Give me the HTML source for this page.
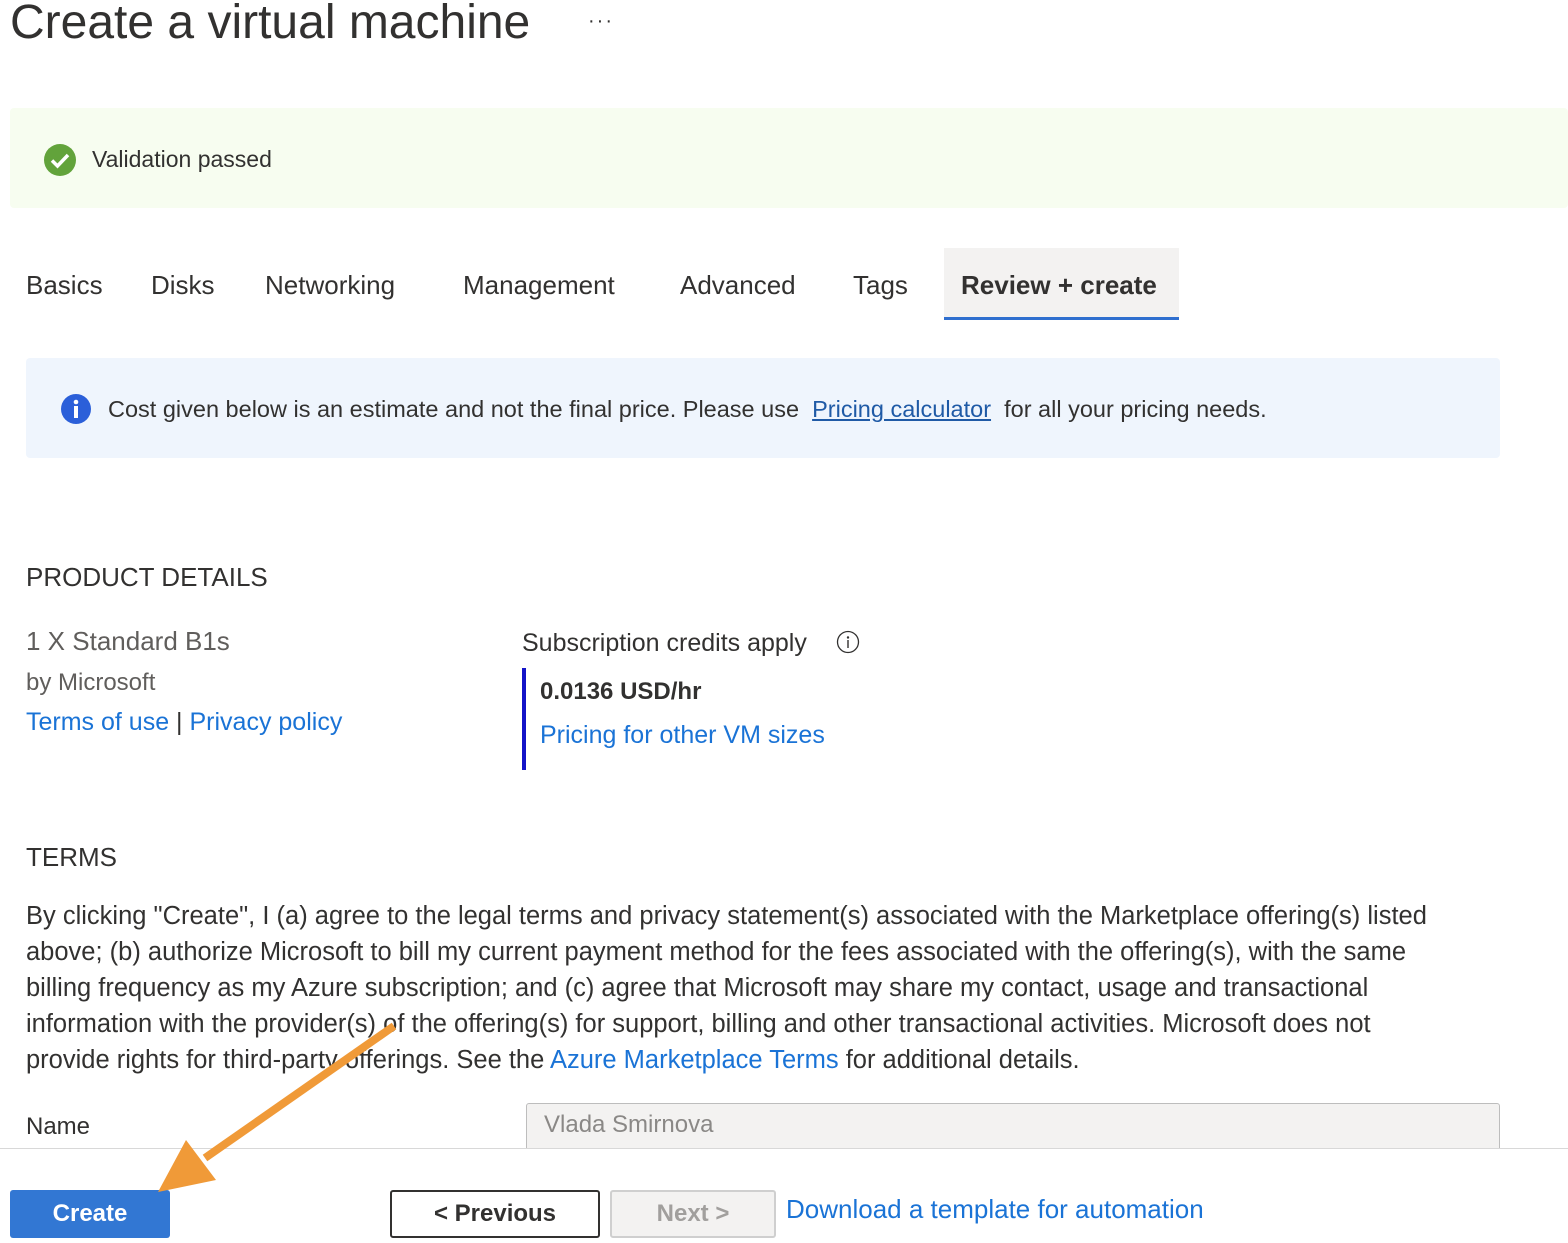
<!DOCTYPE html>
<html><head><meta charset="utf-8"><style>
body{margin:0;width:1568px;height:1242px;background:#fff;font-family:"Liberation Sans",sans-serif;color:#323130;position:relative;overflow:hidden}
.a{position:absolute;white-space:nowrap}
.l{color:#1a73d6}
</style></head><body>
<div class="a" style="left:10px;top:-5px;font-size:48px;color:#323130">Create a virtual machine</div>
<div class="a" style="left:588px;top:10px;font-size:20px;letter-spacing:2px">···</div>
<div class="a" style="left:10px;top:108px;width:1558px;height:100px;background:#f7fdf0;border-radius:4px"></div>
<svg class="a" style="left:43px;top:143px" width="34" height="34"><circle cx="17" cy="17" r="16" fill="#62a33b"/><path d="M9 17.5l5.5 5.5L25 12" stroke="#fff" stroke-width="3.5" fill="none"/></svg>
<div class="a" style="left:92px;top:146px;font-size:23px">Validation passed</div>
<div class="a" style="left:26px;top:270px;font-size:26px">Basics</div>
<div class="a" style="left:151px;top:270px;font-size:26px">Disks</div>
<div class="a" style="left:265px;top:270px;font-size:26px">Networking</div>
<div class="a" style="left:463px;top:270px;font-size:26px">Management</div>
<div class="a" style="left:680px;top:270px;font-size:26px">Advanced</div>
<div class="a" style="left:853px;top:270px;font-size:26px">Tags</div>
<div class="a" style="left:944px;top:248px;width:235px;height:69px;background:#f3f2f1;border-bottom:3px solid #2f6fcf"></div>
<div class="a" style="left:961px;top:270px;font-size:26px;font-weight:bold">Review + create</div>
<div class="a" style="left:26px;top:358px;width:1474px;height:100px;background:#eff5fd;border-radius:4px"></div>
<svg class="a" style="left:60px;top:393px" width="32" height="32"><circle cx="16" cy="16" r="15" fill="#2b5fd9"/><circle cx="16" cy="9" r="2.3" fill="#fff"/><rect x="14" y="13" width="4" height="12" fill="#fff"/></svg>
<div class="a" style="left:108px;top:396px;font-size:23.5px">Cost given below is an estimate and not the final price. Please use &nbsp;<span style="color:#1f5aa6;text-decoration:underline">Pricing calculator</span>&nbsp; for all your pricing needs.</div>
<div class="a" style="left:26px;top:562px;font-size:26px">PRODUCT DETAILS</div>
<div class="a" style="left:26px;top:626px;font-size:26px;color:#605e5c">1 X Standard B1s</div>
<div class="a" style="left:26px;top:669px;font-size:24px;color:#605e5c">by Microsoft</div>
<div class="a" style="left:26px;top:708px;font-size:25px"><span class="l">Terms of use</span> | <span class="l">Privacy policy</span></div>
<div class="a" style="left:522px;top:629px;font-size:25px">Subscription credits apply</div>
<svg class="a" style="left:836px;top:630px" width="24" height="24"><circle cx="12" cy="12" r="10.5" stroke="#323130" stroke-width="1.3" fill="none"/><circle cx="12" cy="7.5" r="1.2" fill="#323130"/><rect x="11.3" y="10" width="1.4" height="8" fill="#323130"/></svg>
<div class="a" style="left:522px;top:668px;width:4px;height:102px;background:#1414c8"></div>
<div class="a" style="left:540px;top:678px;font-size:24px;font-weight:bold">0.0136 USD/hr</div>
<div class="a l" style="left:540px;top:721px;font-size:25px">Pricing for other VM sizes</div>
<div class="a" style="left:26px;top:842px;font-size:26px">TERMS</div>
<div class="a" style="left:26px;top:898px;font-size:25.5px;line-height:36px">By clicking "Create", I (a) agree to the legal terms and privacy statement(s) associated with the Marketplace offering(s) listed<br>above; (b) authorize Microsoft to bill my current payment method for the fees associated with the offering(s), with the same<br>billing frequency as my Azure subscription; and (c) agree that Microsoft may share my contact, usage and transactional<br>information with the provider(s) of the offering(s) for support, billing and other transactional activities. Microsoft does not<br>provide rights for third-party offerings. See the <span class="l">Azure Marketplace Terms</span> for additional details.</div>
<div class="a" style="left:26px;top:1113px;font-size:24px">Name</div>
<div class="a" style="left:526px;top:1103px;width:972px;height:60px;background:#f3f2f1;border:1px solid #bdbdbd;border-radius:3px"></div>
<div class="a" style="left:544px;top:1111px;font-size:24px;color:#8a8886">Vlada Smirnova</div>
<div class="a" style="left:0;top:1148px;width:1568px;height:94px;background:#fff;border-top:1px solid #d8d8d8"></div>
<div class="a" style="left:10px;top:1190px;width:160px;height:48px;background:#3277d3;border-radius:3px;color:#fff;font-size:24px;font-weight:bold;text-align:center;line-height:48px">Create</div>
<div class="a" style="left:390px;top:1190px;width:206px;height:44px;border:2px solid #323130;border-radius:3px;font-size:24px;font-weight:bold;text-align:center;line-height:44px">&lt; Previous</div>
<div class="a" style="left:610px;top:1190px;width:162px;height:44px;border:2px solid #cfcfcf;background:#f3f2f1;border-radius:3px;font-size:24px;font-weight:bold;color:#a19f9d;text-align:center;line-height:44px">Next &gt;</div>
<div class="a l" style="left:786px;top:1194px;font-size:26px">Download a template for automation</div>
<svg class="a" style="left:0;top:0" width="1568" height="1242"><line x1="394" y1="1026" x2="205" y2="1158" stroke="#f09a38" stroke-width="8"/><polygon points="158,1192 216,1180 186,1140" fill="#f09a38"/></svg>
</body></html>
